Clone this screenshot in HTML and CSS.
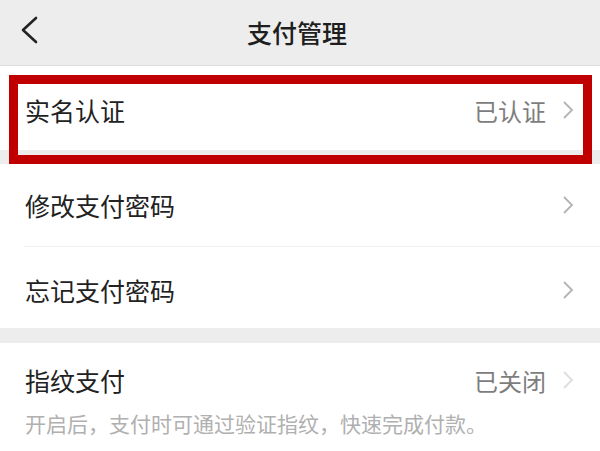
FILE: index.html
```html
<!DOCTYPE html>
<html>
<head>
<meta charset="utf-8">
<title>支付管理</title>
<link rel="stylesheet" href="styles.css">
</head>
<body>
<div class="navbar">
  <span class="back">
    <svg width="20" height="30" viewBox="0 0 20 30"><polyline points="16,3 3,15 16,27" fill="none" stroke="#222" stroke-width="2.6" stroke-linecap="round" stroke-linejoin="round"/></svg>
  </span>
  <span class="title">支付管理</span>
</div>

<div class="group group-auth">
  <div class="row row-first">
    <span class="label">实名认证</span>
    <span class="value">已认证</span>
    <svg class="arrow" width="12" height="20" viewBox="0 0 12 20"><polyline points="2,2 10,10 2,18" fill="none" stroke="#b3b3b3" stroke-width="1.8"/></svg>
  </div>
  <div class="highlight"></div>
</div>

<div class="gap"></div>

<div class="group">
  <div class="row">
    <span class="label">修改支付密码</span>
    <svg class="arrow" width="12" height="20" viewBox="0 0 12 20"><polyline points="2,2 10,10 2,18" fill="none" stroke="#b3b3b3" stroke-width="1.8"/></svg>
  </div>
  <div class="divider"></div>
  <div class="row row-last">
    <span class="label">忘记支付密码</span>
    <svg class="arrow" width="12" height="20" viewBox="0 0 12 20"><polyline points="2,2 10,10 2,18" fill="none" stroke="#b3b3b3" stroke-width="1.8"/></svg>
  </div>
</div>

<div class="gap gap-wide"></div>

<div class="group group-finger">
  <div class="row-finger">
    <span class="label">指纹支付</span>
    <span class="value">已关闭</span>
    <svg class="arrow" width="12" height="20" viewBox="0 0 12 20"><polyline points="2,2 10,10 2,18" fill="none" stroke="#dedede" stroke-width="1.8"/></svg>
  </div>
  <p class="hint">开启后，支付时可通过验证指纹，快速完成付款。</p>
</div>
</body>
</html>
```

FILE: styles.css
```css
html, body {
	margin: 0;
	padding: 0;
	background-color: #ffffff;
	overflow: hidden;
}

body {
	font-family: "Noto Sans CJK SC", "Noto Sans", sans-serif;
	color: #222222;
}

.navbar {
	height: 65px;
	background-color: #ededed;
	border-bottom: 1px solid #dfdfdf;
	display: flex;
	align-items: center;
	justify-content: center;
	position: relative;
}

.back {
	position: absolute;
	left: 20px;
	top: 15px;
	height: 30px;
}

.title {
	font-size: 25px;
	font-weight: 500;
	color: #1e1e1e;
	margin-left: -6px;
	margin-top: -2px;
}

.group {
	background-color: #ffffff;
}

.group-auth {
	position: relative;
}

.row {
	height: 82px;
	display: flex;
	align-items: center;
	padding: 0 26px 0 25px;
}

.row-first {
	height: 84px;
	padding-top: 4px;
	box-sizing: border-box;
}

.row-last {
	height: 81px;
	padding-top: 4px;
	box-sizing: border-box;
}

.label {
	font-size: 25px;
	flex: 1;
}

.value {
	font-size: 24px;
	color: #7d7d7d;
	margin-right: 16px;
}

.arrow {
	display: block;
}

.divider {
	height: 1px;
	margin-left: 24px;
	background-color: #efefef;
}

.gap {
	height: 14px;
	background-color: #ededed;
}

.gap-wide {
	height: 15px;
}

.highlight {
	position: absolute;
	left: 9px;
	right: 8px;
	top: 9px;
	bottom: -14px;
	border: 9px solid #c00000;
	box-sizing: border-box;
}

.group-finger {
	padding-top: 20px;
}

.row-finger {
	height: 34px;
	display: flex;
	align-items: center;
	padding: 0 26px 0 25px;
}

.hint {
	margin: 12px 0 0 25px;
	font-size: 21px;
	line-height: 28px;
	color: #b0b0b0;
}
```
